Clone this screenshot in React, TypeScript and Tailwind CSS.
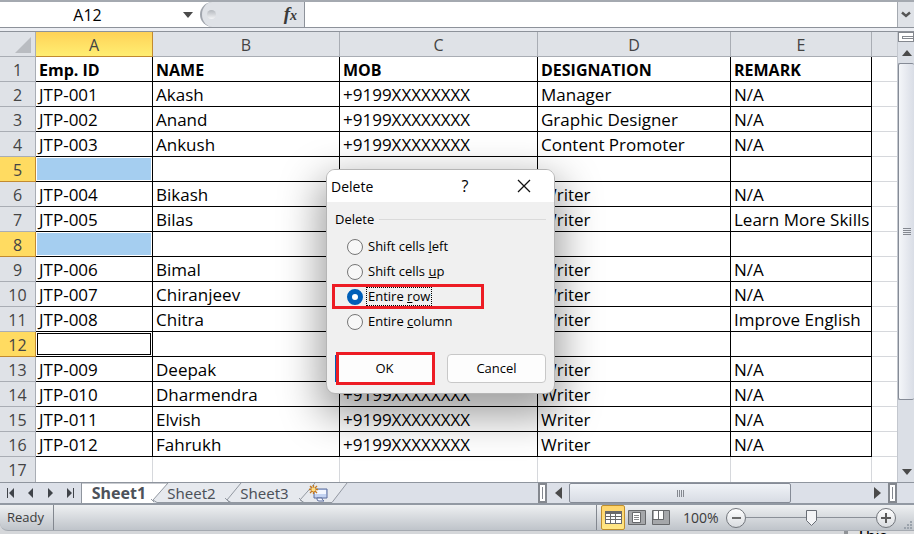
import { useState, type ReactNode } from "react";

type Row = [string, string, string, string, string];

const PHONE = "+9199XXXXXXXX";
const EMPTY: Row = ["", "", "", "", ""];

const rows: Row[] = [
  ["Emp. ID", "NAME", "MOB", "DESIGNATION", "REMARK"],
  ["JTP-001", "Akash", PHONE, "Manager", "N/A"],
  ["JTP-002", "Anand", PHONE, "Graphic Designer", "N/A"],
  ["JTP-003", "Ankush", PHONE, "Content Promoter", "N/A"],
  EMPTY,
  ["JTP-004", "Bikash", "", "Writer", "N/A"],
  ["JTP-005", "Bilas", "", "Writer", "Learn More Skills"],
  EMPTY,
  ["JTP-006", "Bimal", "", "Writer", "N/A"],
  ["JTP-007", "Chiranjeev", "", "Writer", "N/A"],
  ["JTP-008", "Chitra", "", "Writer", "Improve English"],
  EMPTY,
  ["JTP-009", "Deepak", "", "Writer", "N/A"],
  ["JTP-010", "Dharmendra", PHONE, "Writer", "N/A"],
  ["JTP-011", "Elvish", PHONE, "Writer", "N/A"],
  ["JTP-012", "Fahrukh", PHONE, "Writer", "N/A"],
];

const SELECTED = [5, 8, 12];
const ACTIVE = 12;

function Triangle({ dir, className = "" }: { dir: "up" | "down" | "left" | "right"; className?: string }) {
  const points = {
    up: "0,6 5,0 10,6",
    down: "0,0 10,0 5,6",
    left: "7,0 7,12 0,6",
    right: "0,0 7,6 0,12",
  }[dir];
  const wide = dir === "up" || dir === "down";
  return (
    <svg className={className} width={wide ? 10 : 7} height={wide ? 6 : 12} aria-hidden="true">
      <polygon points={points} fill="#4a4a4a" />
    </svg>
  );
}

function FormulaBar() {
  return (
    <div className="flex h-[28px] border-t-2 border-b border-t-[#a4a9b0] border-b-[#8d929a] bg-[#dfe2e7]">
      <div className="flex w-[200px] items-center bg-white">
        <input
          aria-label="Name box"
          defaultValue="A12"
          className="h-full w-[175px] min-w-0 bg-transparent text-center font-['Open_Sans',sans-serif] text-[16px] text-black outline-none"
        />
        <button aria-label="Show names" className="flex h-full flex-1 items-center justify-center">
          <Triangle dir="down" />
        </button>
      </div>
      <div className="flex w-[105px] items-center justify-between border-r border-[#8d929a] bg-white">
        <div className="flex h-full flex-1 items-center justify-between rounded-l-full border-l-2 border-[#a0a5ad] bg-[#dfe2e7] pr-[7px] pl-[5px]">
          <span className="size-[9px] rounded-full bg-linear-to-b from-[#b4b8be] to-[#f4f5f7]" />
          <button aria-label="Insert function" className="font-['Liberation_Serif',serif] text-[19px] leading-[24px] font-bold text-[#3a3a3a] italic">
            f<span className="text-[14px]">x</span>
          </button>
        </div>
      </div>
      <input aria-label="Formula" className="min-w-0 flex-1 bg-white px-2 outline-none" />
      <button aria-label="Expand formula bar" className="flex w-[17px] items-center justify-center border-l border-[#a4a9b0]">
        <svg width="10" height="7" aria-hidden="true">
          <path d="M1 1.5 5 5 9 1.5" fill="none" stroke="#555" strokeWidth="2.4" />
        </svg>
      </button>
    </div>
  );
}

function ColumnHead({ label, active }: { label: string; active?: boolean }) {
  return (
    <th
      scope="col"
      className={
        active
          ? "border-r border-b border-[#c28a30] bg-linear-to-b from-[#ffd257] to-[#ffee72] p-0 pt-[2px] text-center text-[16px] font-normal text-[#444]"
          : "border-r border-b border-[#a9adb4] bg-[#dfe2e7] p-0 pt-[2px] text-center text-[16px] font-normal text-[#444]"
      }
    >
      {label}
    </th>
  );
}

function Sheet() {
  return (
    <table className="w-full min-w-0 flex-1 table-fixed border-separate border-spacing-0 font-['Open_Sans',sans-serif] text-[17px] leading-[22px] whitespace-nowrap text-black">
      <colgroup>
        <col className="w-[36px]" />
        <col className="w-[117px]" />
        <col className="w-[187px]" />
        <col className="w-[198px]" />
        <col className="w-[193px]" />
        <col className="w-[141px]" />
        <col />
      </colgroup>
      <thead>
        <tr className="h-[25px]">
          <th className="border-r border-b border-[#a9adb4] bg-[#dfe2e7] p-0">
            <svg className="mt-[2px] ml-[15px]" width="16" height="16" aria-hidden="true">
              <polygon points="16,0 16,16 0,16" fill="#b9bcc1" />
            </svg>
          </th>
          <ColumnHead label="A" active />
          <ColumnHead label="B" />
          <ColumnHead label="C" />
          <ColumnHead label="D" />
          <ColumnHead label="E" />
          <th className="border-b border-[#a9adb4] bg-[#dfe2e7] p-0" />
        </tr>
      </thead>
      <tbody>
        {rows.map((row, r) => {
          const n = r + 1;
          const selected = SELECTED.includes(n);
          return (
            <tr key={n} className="h-[25px]">
              <th
                scope="row"
                className={
                  selected
                    ? "border-r border-b border-[#c28a30] bg-[#ffdb61] p-0 pt-[2px] text-center text-[16px] font-normal text-[#444]"
                    : "border-r border-b border-[#a9adb4] bg-[#dfe2e7] p-0 pt-[2px] text-center text-[16px] font-normal text-[#444]"
                }
              >
                {n}
              </th>
              {row.map((text, c) => (
                <td
                  key={c}
                  className={
                    r === 0
                      ? "border-r border-b border-black pt-[2px] pr-0 pb-0 pl-[3px] text-[16px] font-bold"
                      : selected && c === 0
                        ? "border-r border-b border-black p-px"
                        : "border-r border-b border-black pt-[2px] pr-0 pb-0 pl-[3px]"
                  }
                >
                  {selected && c === 0 ? (
                    <div className={n === ACTIVE ? "h-[22px] border border-black" : "h-[22px] bg-[#a5cef0]"} />
                  ) : (
                    text
                  )}
                </td>
              ))}
              <td className="border-b border-[#d6d8dc] p-0" />
            </tr>
          );
        })}
        <tr className="h-[25px]">
          <th scope="row" className="border-r border-[#a9adb4] bg-[#dfe2e7] p-0 text-center text-[16px] font-normal text-[#444]">
            17
          </th>
          {[0, 1, 2, 3, 4].map((c) => (
            <td key={c} className="border-r border-[#d6d8dc] p-0" />
          ))}
          <td className="p-0" />
        </tr>
      </tbody>
    </table>
  );
}

function VerticalScroll() {
  return (
    <div className="flex w-[17px] shrink-0 flex-col border-l border-[#c3c7ce] bg-[#dbdfe6]">
      <div className="flex h-[10px] flex-col justify-center border border-[#84888f] bg-white pl-[3px]">
        <span className="h-[3px] border border-r-0 border-[#84888f]" />
      </div>
      <button aria-label="Scroll up" className="flex h-[21px] items-center justify-center pl-[2px]">
        <Triangle dir="up" />
      </button>
      <div className="flex h-[337px] flex-col items-center justify-center gap-px rounded-[2px] border border-r-0 border-[#858b96] bg-linear-to-r from-[#f4f6f9] to-[#d9dde6]">
        {[0, 1, 2, 3].map((i) => (
          <span key={i} className="h-px w-[8px] bg-[#848890]" />
        ))}
      </div>
      <button aria-label="Scroll down" className="mt-auto flex h-[21px] items-center justify-center pl-[2px]">
        <Triangle dir="down" />
      </button>
    </div>
  );
}

function NavArrow({ label, d }: { label: string; d: string }) {
  return (
    <button aria-label={label} className="flex h-full w-[20px] items-center justify-center">
      <svg width="9" height="10" aria-hidden="true">
        <path d={d} fill="#3f4349" />
      </svg>
    </button>
  );
}

function TabBar() {
  return (
    <div className="flex h-[21px] border-t border-[#8f959e] bg-[#dce0e8]">
      <div className="flex w-[82px] items-center border-r border-[#8f959e]">
        <NavArrow label="First sheet" d="M1 0h1v10H1zM8 0v10L3 5z" />
        <NavArrow label="Previous sheet" d="M7 0v10L2 5z" />
        <NavArrow label="Next sheet" d="M2 0v10L7 5z" />
        <NavArrow label="Last sheet" d="M7 0h1v10H7zM1 0v10L6 5z" />
      </div>
      <div className="relative flex w-[268px] font-['Noto_Sans',sans-serif] text-[15px] leading-[20px] text-[#4d525a]">
        <svg className="absolute inset-0" width="268" height="20" aria-hidden="true">
          <path d="M0 0H87L74 17 71 20H0z" fill="#fff" />
          <path d="M86 0H265L250 19H74L71 17z" fill="#e6e9ee" />
          <path d="M0 0H86L71 17 75 19.5H250L265 0M159 0 145 17 149 19.5M233 0 218 17 222 19.5" fill="none" stroke="#9298a1" />
          <path d="M72 19 69 16M147 19 143 15M221 19 217 15" stroke="#9298a1" />
        </svg>
        <button className="relative w-[74px] text-[16px] font-bold">Sheet1</button>
        <button className="relative w-[71px]">Sheet2</button>
        <button className="relative w-[75px]">Sheet3</button>
        <button aria-label="Insert worksheet" className="relative flex flex-1 items-center pl-[6px]">
          <svg width="22" height="18" aria-hidden="true">
            <path d="M6 5h13v9H6z" fill="#c3d3f2" stroke="#5b6d9c" />
            <path d="M7 6h11v4H7z" fill="#f3f7ff" />
            <path d="M9 14v1q0 2 2 2h5q-2-1-2-3z" fill="#f7f9ff" stroke="#5b6d9c" />
            <path d="M5.500 1v9M1 5.500h9M2 2l7 7M9 2 2 9" stroke="#c77a1c" strokeWidth="1.300" />
            <circle cx="5.500" cy="5.500" r="2" fill="#ffdf84" />
          </svg>
        </button>
      </div>
      <div className="flex-1" />
      <div className="flex w-[359px]">
        <div className="flex w-[9px] items-center justify-center border-2 border-[#84888f] bg-white">
          <span className="h-[12px] w-px bg-[#84888f]" />
        </div>
        <button aria-label="Scroll left" className="flex w-[22px] items-center justify-center">
          <Triangle dir="left" />
        </button>
        <div className="flex w-[222px] items-center justify-center gap-px rounded-[2px] border border-[#858b96] bg-linear-to-b from-[#f0f3f7] to-[#d8dce4]">
          {[0, 1, 2, 3].map((i) => (
            <span key={i} className="h-[7px] w-px bg-[#848890]" />
          ))}
        </div>
        <button aria-label="Scroll right" className="ml-auto flex w-[22px] items-center justify-center">
          <Triangle dir="right" />
        </button>
        <div className="flex w-[9px] items-center justify-center border-2 border-[#84888f] bg-white">
          <span className="h-[12px] w-px bg-[#84888f]" />
        </div>
      </div>
      <div className="w-[17px]" />
    </div>
  );
}

function StatusBar() {
  return (
    <footer className="bg-[#d5d7da]">
      <div className="flex h-[28px] items-stretch rounded-bl-[8px] border-t-2 border-b border-t-[#9299a3] border-b-[#a5aab1] bg-linear-to-b from-[#eef0f2] to-[#bfc4ca] font-['Open_Sans',sans-serif] text-[13px] leading-[24px] text-[#3b3b3b]">
        <div className="w-[54px] border-r border-[#82878f] pl-[7px]">Ready</div>
        <div className="flex-1" />
        <div className="flex items-center border-l border-[#82878f] pl-[4px]">
          <button aria-label="Normal view" className="flex h-[25px] w-[24px] items-center justify-center rounded-[2px] border border-[#c08f2c] bg-linear-to-b from-[#ffd46a] to-[#ffe786]">
            <svg width="17" height="13" aria-hidden="true">
              <path d="M0 0h17v13H0z" fill="#6a6a6a" />
              <path d="M1 3h4v2H1zM6 3h4v2H6zM11 3h5v2h-5zM1 6h4v2H1zM6 6h4v2H6zM11 6h5v2h-5zM1 9h4v3H1zM6 9h4v3H6zM11 9h5v3h-5z" fill="#fff" />
            </svg>
          </button>
          <button aria-label="Page layout view" className="flex w-[23px] items-center justify-center">
            <svg width="18" height="15" aria-hidden="true">
              <path d="M.5.5h17v14H.5z" fill="#a5a7aa" stroke="#66686b" />
              <path d="M4.500 2.500h8v10h-8z" fill="#fff" stroke="#66686b" />
              <path d="M6 5.500h5M6 7.500h5M6 9.500h5" stroke="#88898c" />
            </svg>
          </button>
          <button aria-label="Page break preview" className="flex w-[26px] items-center justify-center">
            <svg width="18" height="15" aria-hidden="true">
              <path d="M.5.5h17v14H.5z" fill="#a5a7aa" stroke="#66686b" />
              <path d="M2 1h4v8H2zM7 1h4v8H7z" fill="#fff" />
              <path d="M6.500 1v8.500M1 9.500h10.500V1" fill="none" stroke="#66686b" />
            </svg>
          </button>
          <span className="ml-[9px] w-[43px] text-[14px]">100%</span>
          <button aria-label="Zoom out" className="flex size-[20px] items-center justify-center rounded-full border border-[#72767c] bg-linear-to-b from-white to-[#d9dce0]">
            <span className="h-[2px] w-[9px] bg-[#6b6b6b]" />
          </button>
          <div className="flex w-[130px] items-center">
            <span className="h-px flex-1 bg-[#8a8f97]" />
            <svg width="11" height="16" aria-hidden="true">
              <path d="M.5.5h10v10l-5 5-5-5z" fill="#f3f4f6" stroke="#686d75" />
            </svg>
            <span className="h-px flex-1 bg-[#8a8f97]" />
          </div>
          <button aria-label="Zoom in" className="flex size-[20px] items-center justify-center rounded-full border border-[#72767c] bg-linear-to-b from-white to-[#d9dce0]">
            <svg width="10" height="10" aria-hidden="true">
              <path d="M5 0v10M0 5h10" stroke="#5b5b5b" strokeWidth="2" />
            </svg>
          </button>
          <svg className="ml-[7px] self-end" width="11" height="10" aria-hidden="true">
            <path d="M7 1h2v2H7zM4 4h2v2H4zM7 4h2v2H7zM1 7h2v2H1zM4 7h2v2H4zM7 7h2v2H7z" fill="#9ba3ac" />
          </svg>
        </div>
      </div>
      <div className="flex h-[3px] justify-end overflow-hidden">
        <div className="w-[70px] border-l-4 border-[#909397] bg-[#dedfe1] pl-[8px] font-[Lato,sans-serif] text-[17px] leading-[10px] text-black">
          This
        </div>
      </div>
    </footer>
  );
}

const options: { id: string; label: ReactNode }[] = [
  { id: "left", label: <>Shift cells <u>l</u>eft</> },
  { id: "up", label: <>Shift cells <u>u</u>p</> },
  { id: "row", label: <>Entire <u>r</u>ow</> },
  { id: "column", label: <>Entire <u>c</u>olumn</> },
];

function DeleteDialog() {
  const [choice, setChoice] = useState("row");
  return (
    <div
      role="dialog"
      aria-label="Delete"
      className="absolute top-[169px] left-[326px] w-[229px] overflow-hidden rounded-[9px] border border-[#b5b5b5] bg-[#f0f0f0] pb-[8px] font-['Open_Sans',sans-serif] text-[13px] text-black shadow-[0_16px_40px_6px_rgba(0,0,0,0.38)]"
    >
      <div className="flex h-[32px] items-center bg-white pl-[4px]">
        <h2 className="w-[124px] text-[14px]">Delete</h2>
        <button aria-label="Help" className="w-[20px] text-[16px] leading-[20px]">?</button>
        <button aria-label="Close" className="ml-[39px] flex size-[20px] items-center justify-center">
          <svg width="14" height="14" aria-hidden="true">
            <path d="m1 1 12 12M13 1 1 13" stroke="#111" strokeWidth="1.300" />
          </svg>
        </button>
      </div>
      <fieldset>
        <div className="flex h-[32px] items-center gap-[5px] pt-[3px] pr-[8px] pl-[8px]">
          <legend>Delete</legend>
          <span className="h-px flex-1 bg-[#dadada]" />
        </div>
        {options.map(({ id, label }) => (
          <label
            key={id}
            className={
              id === "row"
                ? "ml-[5px] flex h-[25px] w-[152px] items-center border-3 border-[#ed1c24] pl-[12px]"
                : "ml-[5px] flex h-[25px] w-[152px] items-center pl-[15px]"
            }
          >
            <input
              type="radio"
              name="delete"
              checked={choice === id}
              onChange={() => setChoice(id)}
              className="size-[16px] appearance-none rounded-full border border-[#767676] bg-[#f7f7f7] checked:border-5 checked:border-[#005fb8] checked:bg-white"
            />
            <span
              className={
                choice === id
                  ? "ml-[3px] border border-dotted border-black pr-px pl-px leading-[17px]"
                  : "ml-[5px] leading-[17px]"
              }
            >
              {label}
            </span>
          </label>
        ))}
      </fieldset>
      <div className="mt-[18px] flex items-center gap-[12px] pr-[8px] pl-[9px]">
        <button className="h-[33px] w-[99px] border-3 border-[#ed1c24] bg-[#fdfdfd] pr-[2px] shadow-[-4px_0_0_-3px_#005fb8]">OK</button>
        <button className="h-[29px] flex-1 rounded-[4px] border border-[#c8c8c8] bg-[#fdfdfd]">Cancel</button>
      </div>
    </div>
  );
}

export default function App() {
  return (
    <main className="relative flex min-h-screen flex-col overflow-hidden bg-[#dfe2e7]">
      <FormulaBar />
      <div className="h-[3px] bg-[#eceef3]" />
      <div className="flex border-t border-[#8d929a] bg-white">
        <Sheet />
        <VerticalScroll />
      </div>
      <TabBar />
      <StatusBar />
      <DeleteDialog />
    </main>
  );
}
